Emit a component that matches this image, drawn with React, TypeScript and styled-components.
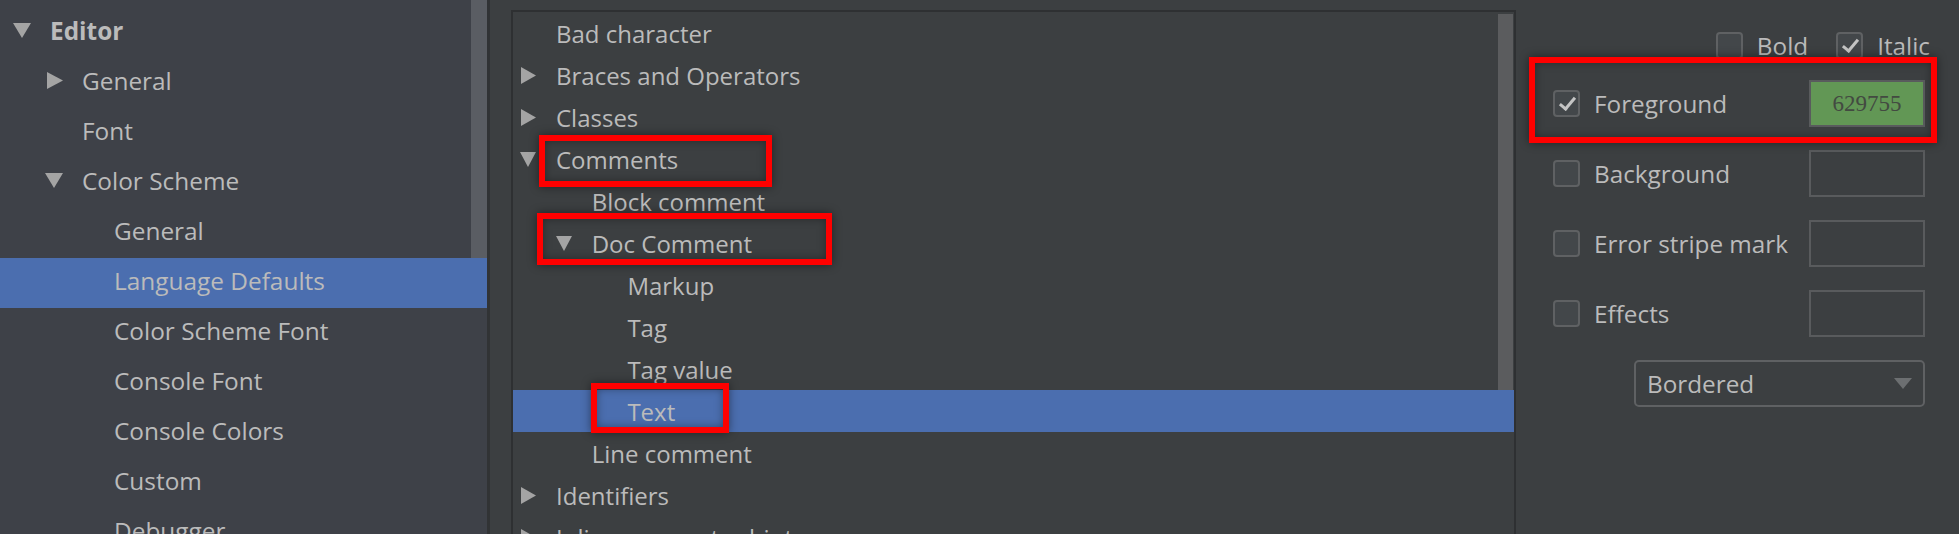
import React from "react";

import styled, { createGlobalStyle } from "styled-components";

type Dir = "down" | "right" | "none";

type Node = {
    label: string,
    level: number,
    arrow?: Dir,
    bold?: boolean,
    selected?: boolean,
};

const sidebarNodes: Node[] = [
    { label: "Editor", level: 0, arrow: "down", bold: true },
    { label: "General", level: 1, arrow: "right" },
    { label: "Font", level: 1 },
    { label: "Color Scheme", level: 1, arrow: "down" },
    { label: "General", level: 2 },
    { label: "Language Defaults", level: 2, selected: true },
    { label: "Color Scheme Font", level: 2 },
    { label: "Console Font", level: 2 },
    { label: "Console Colors", level: 2 },
    { label: "Custom", level: 2 },
    { label: "Debugger", level: 2 },
];

const attributeNodes: Node[] = [
    { label: "Bad character", level: 0 },
    { label: "Braces and Operators", level: 0, arrow: "right" },
    { label: "Classes", level: 0, arrow: "right" },
    { label: "Comments", level: 0, arrow: "down" },
    { label: "Block comment", level: 1 },
    { label: "Doc Comment", level: 1, arrow: "down" },
    { label: "Markup", level: 2 },
    { label: "Tag", level: 2 },
    { label: "Tag value", level: 2 },
    { label: "Text", level: 2, selected: true },
    { label: "Line comment", level: 1 },
    { label: "Identifiers", level: 0, arrow: "right" },
    { label: "Inline parameter hints", level: 0, arrow: "right" },
];

const GlobalStyle = createGlobalStyle`
    html, body {
        margin: 0;
        padding: 0;
        background: #3c3f41;
        overflow: hidden;
    }
`;

const Arrow: React.FC<{ dir: Dir, big?: boolean }> = ({ dir, big }) => {
    if (dir === "down") {
        const w = big ? 18 : 16;
        const h = 15;
        return (
            <svg width={w} height={h} viewBox={`0 0 ${w} ${h}`}>
                <polygon points={`0,0 ${w},0 ${w / 2},${h}`} fill="#a4a4a4" />
            </svg>
        );
    }
    const w = big ? 16 : 15;
    const h = 17;
    return (
        <svg width={w} height={h} viewBox={`0 0 ${w} ${h}`}>
            <polygon points={`0,0 ${w},${h / 2} 0,${h}`} fill="#a4a4a4" />
        </svg>
    );
};

const App: React.FC = () => {
    return (
        <Page>
            <GlobalStyle />
            <Sidebar>
                {sidebarNodes.map((n, i) => (
                    <SideRow key={i} Level={n.level} Selected={!!n.selected}>
                        <SideArrowSlot Dir={n.arrow || "none"}>
                            {n.arrow && <Arrow dir={n.arrow} big />}
                        </SideArrowSlot>
                        <SideLabel Bold={!!n.bold}>{n.label}</SideLabel>
                    </SideRow>
                ))}
                <SideThumb />
            </Sidebar>
            <Divider />
            <Main>
                <AttrTree>
                    {attributeNodes.map((n, i) => (
                        <TreeRow key={i} Level={n.level} Selected={!!n.selected}>
                            <TreeArrowSlot Dir={n.arrow || "none"}>
                                {n.arrow && <Arrow dir={n.arrow} />}
                            </TreeArrowSlot>
                            <TreeLabel>{n.label}</TreeLabel>
                        </TreeRow>
                    ))}
                    <TreeThumb />
                    <Highlight style={{ left: 26, top: 123, width: 233, height: 52 }} />
                    <Highlight style={{ left: 24, top: 201, width: 295, height: 52 }} />
                    <Highlight style={{ left: 78, top: 371, width: 138, height: 50 }} />
                </AttrTree>
                <Options>
                    <StyleRow>
                        <CheckBox Checked={false} />
                        <OptionLabel>Bold</OptionLabel>
                        <Spacer />
                        <CheckBox Checked={true} />
                        <OptionLabel>Italic</OptionLabel>
                    </StyleRow>
                    <AttrList>
                        <AttrRow>
                            <CheckBox Checked={true} />
                            <OptionLabel>Foreground</OptionLabel>
                            <Swatch Color="#629755">629755</Swatch>
                        </AttrRow>
                        <AttrRow>
                            <CheckBox Checked={false} />
                            <OptionLabel>Background</OptionLabel>
                            <Swatch />
                        </AttrRow>
                        <AttrRow>
                            <CheckBox Checked={false} />
                            <OptionLabel>Error stripe mark</OptionLabel>
                            <Swatch />
                        </AttrRow>
                        <AttrRow>
                            <CheckBox Checked={false} />
                            <OptionLabel>Effects</OptionLabel>
                            <Swatch />
                        </AttrRow>
                        <ComboBox>
                            <span>Bordered</span>
                            <svg width="18" height="11" viewBox="0 0 18 11">
                                <polygon points="0,0 18,0 9,11" fill="#6c6f71" />
                            </svg>
                        </ComboBox>
                    </AttrList>
                    <Highlight style={{ left: 13, top: 47, width: 408, height: 86 }} />
                </Options>
            </Main>
        </Page>
    );
};

const Page = styled.div`
    display: flex;
    width: 1959px;
    height: 534px;
    overflow: hidden;
    font-family: "Open Sans", "Noto Sans", sans-serif;
    color: #bbbbbb;
`;

const Sidebar = styled.div`
    position: relative;
    width: 487px;
    flex-shrink: 0;
    padding-top: 8px;
    background: #3e4148;
    display: flex;
    flex-direction: column;
`;

type RowProps = {
    Level: number;
    Selected: boolean;
};

const SideRow = styled.div<RowProps>`
    display: flex;
    align-items: center;
    height: 50px;
    box-sizing: border-box;
    padding: 0 0 5px ${props => 4 + props.Level * 32}px;
    background: ${props => props.Selected ? "#4b6eaf" : "transparent"};
    flex-shrink: 0;
`;

const SideArrowSlot = styled.div<{ Dir: Dir }>`
    width: 46px;
    flex-shrink: 0;
    display: flex;
    align-items: center;
    padding-left: ${props => props.Dir === "right" ? 11 : 9}px;
    box-sizing: border-box;
`;

const SideLabel = styled.span<{ Bold: boolean }>`
    font-size: 24.4px;
    font-weight: ${props => props.Bold ? 700 : 400};
    white-space: nowrap;
`;

const SideThumb = styled.div`
    position: absolute;
    top: 0;
    right: 0;
    width: 16px;
    height: 258px;
    background: #5a5d63;
`;

const Divider = styled.div`
    width: 3px;
    flex-shrink: 0;
    background: #313335;
`;

const Main = styled.div`
    flex: 1;
    display: flex;
    padding: 10px 0 0 21px;
    background: #3c3f41;
`;

const AttrTree = styled.div`
    position: relative;
    width: 1005px;
    flex-shrink: 0;
    box-sizing: border-box;
    border: 2px solid #2e3032;
    border-bottom: none;
    background: #3c3f41;
    display: flex;
    flex-direction: column;
`;

const TreeRow = styled.div<RowProps>`
    display: flex;
    align-items: center;
    height: 42px;
    flex-shrink: 0;
    padding-left: ${props => 7 + props.Level * 35.7}px;
    background: ${props => props.Selected ? "#4b6eaf" : "transparent"};
`;

const TreeArrowSlot = styled.div<{ Dir: Dir }>`
    width: 36px;
    flex-shrink: 0;
    display: flex;
    align-items: center;
    padding-left: ${props => props.Dir === "right" ? 1 : 0}px;
    box-sizing: border-box;
`;

const TreeLabel = styled.span`
    font-size: 24px;
    white-space: nowrap;
`;

const TreeThumb = styled.div`
    position: absolute;
    top: 2px;
    right: 1px;
    width: 15px;
    height: 376px;
    background: #5b5c5e;
`;

const Highlight = styled.div`
    position: absolute;
    box-sizing: border-box;
    border: 6px solid #ff0000;
    box-shadow: 0 0 9px rgba(0, 0, 0, 0.45), inset 0 0 9px rgba(0, 0, 0, 0.35);
    pointer-events: none;
`;

const Options = styled.div`
    position: relative;
    flex: 1;
    display: flex;
    flex-direction: column;
    padding: 22px 34px 0 37px;
`;

const StyleRow = styled.div`
    display: flex;
    align-items: center;
    justify-content: flex-end;
    height: 27px;
    margin-right: -5px;
`;

const Spacer = styled.div`
    width: 28px;
`;

const CheckBox = styled.div<{ Checked: boolean }>`
    position: relative;
    width: 27px;
    height: 27px;
    flex-shrink: 0;
    box-sizing: border-box;
    border: 2px solid #5f6163;
    border-radius: 4px;
    background: #43474a;
    margin-right: 14px;

    &::after {
        content: "";
        display: ${props => props.Checked ? "block" : "none"};
        position: absolute;
        left: 8px;
        top: 2px;
        width: 6px;
        height: 13px;
        border: solid #c4c4c4;
        border-width: 0 3px 3px 0;
        transform: rotate(40deg);
    }
`;

const OptionLabel = styled.span`
    font-size: 24.3px;
    white-space: nowrap;
`;

const AttrList = styled.div`
    display: flex;
    flex-direction: column;
    gap: 23px;
    margin-top: 21px;
`;

const AttrRow = styled.div`
    display: flex;
    align-items: center;
    height: 47px;
`;

const Swatch = styled.div<{ Color?: string }>`
    margin-left: auto;
    width: 116px;
    height: 47px;
    box-sizing: border-box;
    border: 2px solid #595b5d;
    background: ${props => props.Color || "transparent"};
    display: flex;
    align-items: center;
    justify-content: center;
    font-family: "Liberation Serif", "Times New Roman", serif;
    font-size: 23px;
    color: #434a41;
`;

const ComboBox = styled.div`
    margin-left: auto;
    width: 291px;
    height: 47px;
    box-sizing: border-box;
    border: 2px solid #5f6163;
    border-radius: 5px;
    display: flex;
    align-items: center;
    justify-content: space-between;
    padding: 0 11px 0 11px;
    font-size: 24.3px;
`;

export default App;
